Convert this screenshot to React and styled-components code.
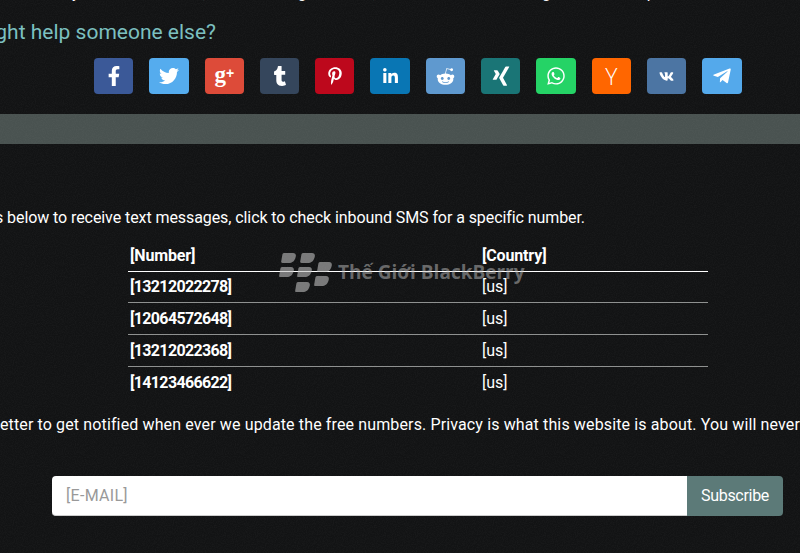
import React from "react";
import styled, { createGlobalStyle } from "styled-components";
import {
  FaFacebookF, FaTwitter, FaTumblr, FaPinterestP, FaLinkedinIn,
  FaRedditAlien, FaXing, FaWhatsapp, FaVk, FaTelegramPlane,
} from "react-icons/fa";

const noise = `url("data:image/svg+xml,%3Csvg xmlns='http://www.w3.org/2000/svg' width='160' height='160'%3E%3Cfilter id='n'%3E%3CfeTurbulence type='fractalNoise' baseFrequency='.9' numOctaves='2' stitchTiles='stitch'/%3E%3CfeColorMatrix values='0 0 0 0 1 0 0 0 0 1 0 0 0 0 1 .5 0 0 0 -.2'/%3E%3C/filter%3E%3Crect width='160' height='160' filter='url(%23n)' opacity='.12'/%3E%3C/svg%3E")`;

const Global = createGlobalStyle`
  html, body { margin: 0; padding: 0; background: #121314; }
  * { box-sizing: border-box; }
`;

const Page = styled.div`
  position: relative;
  width: 800px;
  height: 553px;
  overflow: hidden;
  color: #fff;
  font-family: Roboto, "Noto Sans", sans-serif;
  font-size: 16px;
  background-color: #121314;
  background-image: ${noise};
`;

const ClippedTop = styled.div`
  height: 3px;
  overflow: hidden;
  display: flex;
  align-items: flex-end;
`;
const ClippedGlyph = styled.span`
  flex: none;
  margin-left: ${(p) => p.$gap}px;
  line-height: 20px;
  height: 20px;
`;

const Question = styled.h2`
  margin: 17px 0 0;
  width: 216px;
  display: flex;
  justify-content: flex-end;
  white-space: nowrap;
  font-weight: 400;
  font-size: 21px;
  line-height: 24px;
  color: #7cc0c0;
`;

const ShareRow = styled.div`
  display: flex;
  gap: 16px;
  margin: 14px 0 0 94px;
`;
const ShareButton = styled.a`
  width: 39.3px;
  height: 36px;
  border-radius: 4px;
  background: ${(p) => p.$bg};
  color: #fff;
  display: flex;
  align-items: center;
  justify-content: center;
  font-size: ${(p) => p.$size || 18}px;
`;
const YGlyph = styled.span`
  font-family: "Open Sans", sans-serif;
  font-weight: 300;
  font-size: 23px;
  line-height: 1;
`;
const GPlusGlyph = styled.span`
  font-family: "Liberation Serif", serif;
  font-weight: 700;
  font-size: 23px;
  line-height: 1;
  margin-top: -4px;
  & > small { font-size: 14px; vertical-align: 4px; font-family: "Liberation Sans", sans-serif; }
`;

const Band = styled.div`
  height: 30px;
  margin-top: 20px;
  background-color: #495250;
  background-image: ${noise};
`;

const RightEnded = styled.p`
  margin: ${(p) => p.$top}px 0 0;
  width: ${(p) => p.$end}px;
  display: flex;
  justify-content: flex-end;
  white-space: nowrap;
  font-size: 16px;
  line-height: 20px;
  letter-spacing: ${(p) => p.$ls}px;
`;

const Table = styled.table`
  margin: 12px 0 0 128px;
  width: 580px;
  border-collapse: collapse;
  table-layout: fixed;
  font-size: 16px;
`;
const Th = styled.th`
  height: 31px;
  padding: 0 2px;
  width: ${(p) => p.$w || "auto"};
  text-align: left;
  font-weight: 700;
  letter-spacing: -.15px;
  border-bottom: 1px solid #fff;
`;
const Td = styled.td`
  height: 31.7px;
  padding: 0 2px;
  font-weight: ${(p) => (p.$bold ? 700 : 400)};
  letter-spacing: ${(p) => (p.$bold ? "-.65px" : "0")};
`;
const Row = styled.tr`
  border-bottom: 1px solid #8f9190;
  &:last-child { border-bottom: none; }
`;

const Form = styled.form`
  display: flex;
  height: 40px;
  margin: 41px 0 0 52px;
  width: 731px;
`;
const Email = styled.input`
  flex: 1;
  border: none;
  border-bottom: 1px solid #ccc;
  border-radius: 4px 0 0 4px;
  background: #fff;
  padding: 0 14px;
  font: 400 16px Roboto, sans-serif;
  letter-spacing: .3px;
  &::placeholder { color: #999; opacity: 1; }
`;
const Subscribe = styled.button`
  width: 96px;
  border: none;
  border-radius: 0 4px 4px 0;
  background: #5c7a78;
  color: #fff;
  font: 400 16px Roboto, sans-serif;
  letter-spacing: -.3px;
`;

const Watermark = styled.div`
  position: absolute;
  left: 278px;
  top: 252px;
  display: flex;
  align-items: center;
  gap: 5px;
  color: rgba(190, 190, 190, .5);
  font: 700 19px "Open Sans", sans-serif;
  white-space: nowrap;
`;

const Blob = ({ x, y }) => (
  <path transform={`translate(${x} ${y})`} d="M3 0h9c2.2 0 3.2 1.4 2.8 3.4C14 7.6 11.5 10 7.5 10H1.5C.4 10 0 9.4.2 8.4L1.3 2C1.5.7 2 0 3 0z" />
);
const BBLogo = () => (
  <svg width="55" height="40" viewBox="0 0 55 40" fill="rgba(190,190,190,.6)">
    <Blob x={3} y={1} /><Blob x={22} y={1} />
    <Blob x={1} y={15} /><Blob x={19} y={15} />
    <Blob x={39} y={10} /><Blob x={36} y={24} />
    <Blob x={17} y={30} />
  </svg>
);

const shares = [
  [<FaFacebookF />, "#3b5998", 20], [<FaTwitter />, "#55acee", 20],
  [<GPlusGlyph>g<small>+</small></GPlusGlyph>, "#dd4b39", 20],
  [<FaTumblr />, "#35465c", 20], [<FaPinterestP />, "#bd081c", 18], [<FaLinkedinIn />, "#0976b4", 17],
  [<FaRedditAlien />, "#5f99cf", 19], [<FaXing />, "#1a7576", 22], [<FaWhatsapp />, "#25d366", 20],
  [<YGlyph>Y</YGlyph>, "#ff6600", 20], [<FaVk />, "#4c75a3", 15], [<FaTelegramPlane />, "#54a9eb", 20],
];
const numbers = ["13212022278", "12064572648", "13212022368", "14123466622"];
const tails = [[72, "y"], [123, ","], [92, "g"], [66, ","], [166, "g"], [96, "p"]];

export default function App() {
  return (
    <Page>
      <Global />
      <ClippedTop>
        {tails.map(([gap, c], i) => <ClippedGlyph key={i} $gap={gap}>{c}</ClippedGlyph>)}
      </ClippedTop>
      <Question>this might help someone else?</Question>
      <ShareRow>
        {shares.map(([icon, bg, size], i) => (
          <ShareButton key={i} $bg={bg} $size={size}>{icon}</ShareButton>
        ))}
      </ShareRow>
      <Band />
      <RightEnded $top={64} $end={585} $ls={-0.08}>Use the numbers below to receive text messages, click to check inbound SMS for a specific number.</RightEnded>
      <Table>
        <thead>
          <tr><Th $w="352px">[Number]</Th><Th>[Country]</Th></tr>
        </thead>
        <tbody>
          {numbers.map((n) => (
            <Row key={n}><Td $bold>[{n}]</Td><Td>[us]</Td></Row>
          ))}
        </tbody>
      </Table>
      <RightEnded $top={17} $end={800} $ls={0.13}>Subscribe to our newsletter to get notified when ever we update the free numbers. Privacy is what this website is about. You will never</RightEnded>
      <Form onSubmit={(e) => e.preventDefault()}>
        <Email placeholder="[E-MAIL]" />
        <Subscribe>Subscribe</Subscribe>
      </Form>
      <Watermark>
        <BBLogo />
        <span>Thế Giới BlackBerry</span>
      </Watermark>
    </Page>
  );
}
